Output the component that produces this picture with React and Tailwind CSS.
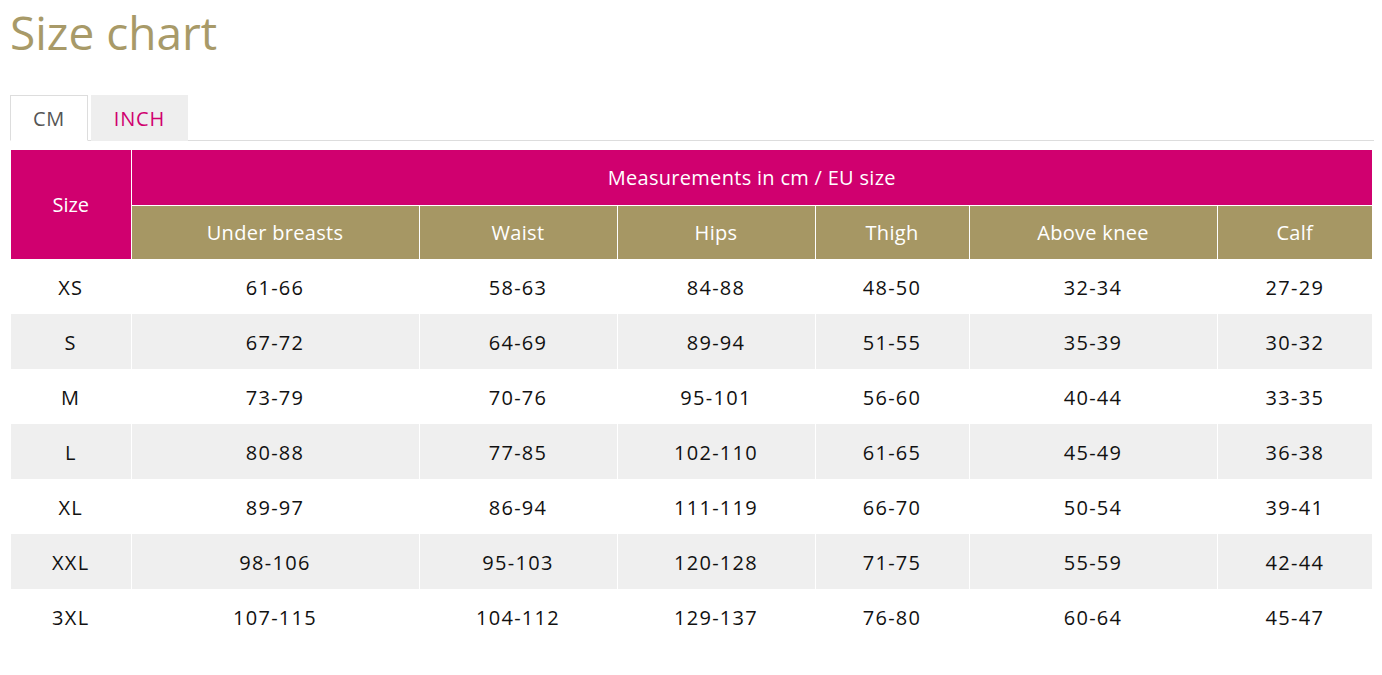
import { useState } from "react";

const rows = [
  ["XS", "61-66", "58-63", "84-88", "48-50", "32-34", "27-29"],
  ["S", "67-72", "64-69", "89-94", "51-55", "35-39", "30-32"],
  ["M", "73-79", "70-76", "95-101", "56-60", "40-44", "33-35"],
  ["L", "80-88", "77-85", "102-110", "61-65", "45-49", "36-38"],
  ["XL", "89-97", "86-94", "111-119", "66-70", "50-54", "39-41"],
  ["XXL", "98-106", "95-103", "120-128", "71-75", "55-59", "42-44"],
  ["3XL", "107-115", "104-112", "129-137", "76-80", "60-64", "45-47"],
];

const columns = ["Under breasts", "Waist", "Hips", "Thigh", "Above knee", "Calf"];

const App = () => {
  const [unit, setUnit] = useState("cm");

  return (
    <div className="min-h-screen bg-white pl-[10px] pr-2 font-['Open_Sans',sans-serif]">
      <h1 className="pt-[4px] text-[46px] leading-[56px] text-[#a89a68]">
        Size chart
      </h1>

      <div className="mt-[35px] flex items-end border-b border-[#dddddd]">
        <button
          className={`-mb-px h-[46px] px-[22px] pt-px text-[20px] tracking-[0.6px] ${
            unit === "cm"
              ? "border border-[#dddddd] border-b-white bg-white text-[#555555]"
              : "bg-[#eeeeee] text-[#d0006f]"
          }`}
          onClick={() => setUnit("cm")}
        >
          CM
        </button>
        <button
          className={`-mb-px ml-[3px] h-[46px] px-[23px] pt-px text-[20px] tracking-[0.8px] ${
            unit === "inch"
              ? "border border-[#dddddd] border-b-white bg-white text-[#555555]"
              : "bg-[#eeeeee] text-[#d0006f]"
          }`}
          onClick={() => setUnit("inch")}
        >
          INCH
        </button>
      </div>

      <table className="ml-px mt-[9px] w-[1361px] table-fixed border-collapse text-center text-[20px]">
        <colgroup>
          <col className="w-[120px]" />
          <col className="w-[288px]" />
          <col className="w-[198px]" />
          <col className="w-[198px]" />
          <col className="w-[154px]" />
          <col className="w-[248px]" />
          <col className="w-[155px]" />
        </colgroup>
        <thead>
          <tr>
            <th
              rowSpan={2}
              className="border-r border-white bg-[#d0006f] pt-px font-normal text-white"
            >
              Size
            </th>
            <th
              colSpan={6}
              className="h-[55px] border-b border-white bg-[#d0006f] pt-px font-normal tracking-[0.3px] text-white"
            >
              Measurements in cm / EU size
            </th>
          </tr>
          <tr>
            {columns.map((col) => (
              <th
                key={col}
                className="h-[54px] border-r border-white bg-[#a69764] pt-px font-normal tracking-[0.3px] text-white last:border-r-0"
              >
                {col}
              </th>
            ))}
          </tr>
        </thead>
        <tbody>
          {rows.map((row, i) => (
            <tr key={row[0]} className={i % 2 === 1 ? "bg-[#efefef]" : "bg-white"}>
              {row.map((cell, j) => (
                <td
                  key={j}
                  className="h-[55px] border-r border-white pt-[2px] tracking-[1.3px] text-[#111111] last:border-r-0"
                >
                  {cell}
                </td>
              ))}
            </tr>
          ))}
        </tbody>
      </table>
    </div>
  );
};

export default App;
